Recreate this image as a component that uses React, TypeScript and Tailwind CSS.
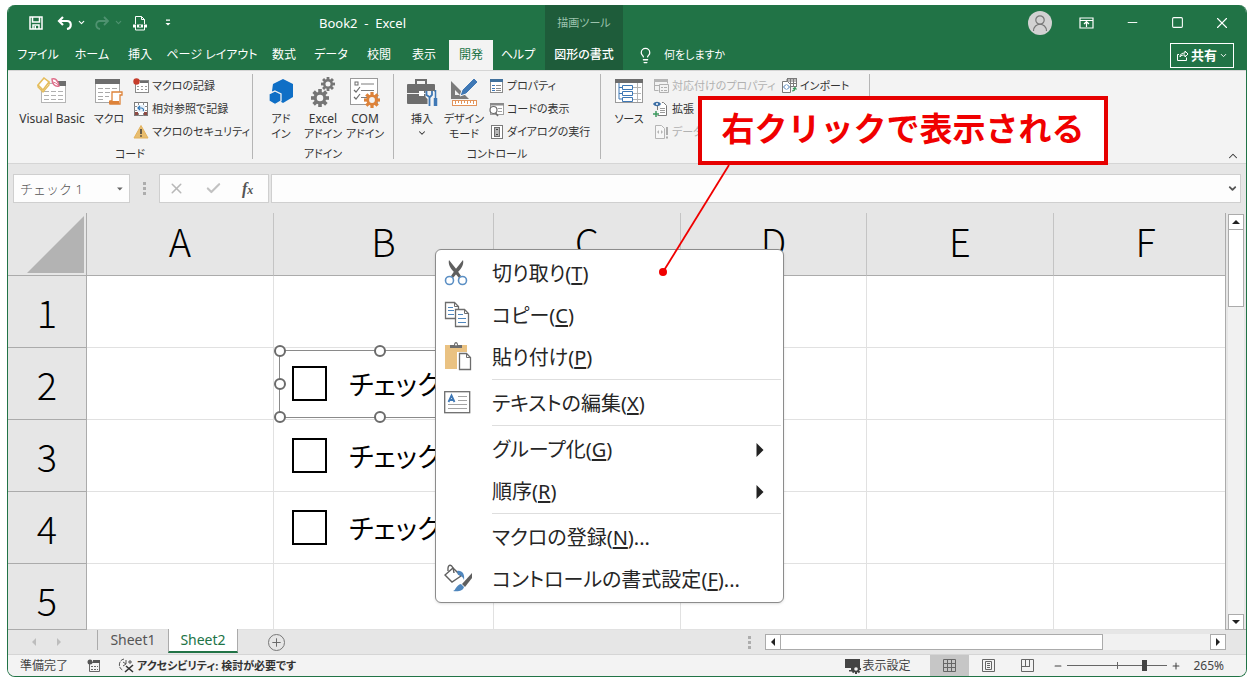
import React, { useState } from 'react';
import { ChevronDown, ChevronUp, Lightbulb, X, Check, Minus, Plus, Square } from 'lucide-react';

const tabs = [
  { label: 'ファイル', width: 'w-[54px]' },
  { label: 'ホーム', width: 'w-[54px]' },
  { label: '挿入', width: 'w-[42px]' },
  { label: 'ページ レイアウト', width: 'w-[102px]' },
  { label: '数式', width: 'w-[42px]' },
  { label: 'データ', width: 'w-[52px]' },
  { label: '校閲', width: 'w-[44px]' },
  { label: '表示', width: 'w-[46px]' },
  { label: '開発', width: 'w-[44px]' },
  { label: 'ヘルプ', width: 'w-[50px]' },
];

const columns = [
  { name: 'A', width: 'w-[187px]' },
  { name: 'B', width: 'w-[220px]' },
  { name: 'C', width: 'w-[187px]' },
  { name: 'D', width: 'w-[186px]' },
  { name: 'E', width: 'w-[187px]' },
  { name: 'F', width: '' },
];

/* ---------- ribbon icons ---------- */

const VisualBasicIcon = () => (
  <svg width="30" height="28" viewBox="0 0 30 28" fill="none">
    <rect x="4.500" y="6.500" width="24" height="19" fill="#fff" stroke="#b5b5b5" />
    <rect x="20" y="4" width="9" height="5" fill="#6d6d6d" />
    <path d="M7 14.500h5M14 14.500h5M21 14.500h5M7 18.500h5M14 18.500h5M21 18.500h5M7 22.500h5M14 22.500h5M21 22.500h5" stroke="#b0b0b0" />
    <path d="M7 1l5 4-6 8-5-5z" fill="#fff" stroke="#e5bd5c" strokeWidth="1.600" />
    <path d="M12 5v3l-6 7-5-5V8" stroke="#e5bd5c" strokeWidth="1.300" />
    <path d="M15 2c3-1 6 1 7 7-4 1-7-2-7-7z" fill="#fff" stroke="#e0708c" strokeWidth="1.500" />
    <path d="M15 5c2 0 5 1 7 4" stroke="#e0708c" />
  </svg>
);

const MacroIcon = () => (
  <svg width="30" height="28" viewBox="0 0 30 28" fill="none">
    <rect x="1.500" y="2.500" width="24" height="23" fill="#fff" stroke="#a8a8a8" />
    <rect x="1" y="2" width="25" height="5" fill="#6d6d6d" />
    <path d="M4 11.500h5M11 11.500h5M18 11.500h5M4 15.500h5M11 15.500h5M4 19.500h5M11 19.500h4M4 22.500h5" stroke="#a8a8a8" />
    <path d="M18 15h10v3h-2v9H16v-3h2z" fill="#fff" stroke="#dd8239" strokeWidth="1.300" />
    <path d="M15 24h10v3H15z" fill="#dd8239" />
  </svg>
);

const RecordIcon = () => (
  <svg width="16" height="16" viewBox="0 0 16 16" fill="none">
    <rect x="2.500" y="2.500" width="13" height="12" fill="#fff" stroke="#8a8a8a" />
    <path d="M7 3h8v2H7z" fill="#6d6d6d" />
    <path d="M4 8.500h2M8 8.500h2M12 8.500h2M4 11.500h2M8 11.500h2M12 11.500h2" stroke="#9a9a9a" />
    <circle cx="3.500" cy="3.500" r="3.200" fill="#c63d2b" />
  </svg>
);

const RelativeIcon = () => (
  <svg width="16" height="16" viewBox="0 0 16 16" fill="none">
    <rect x="1.500" y="1.500" width="13" height="13" fill="#fff" stroke="#7b7b7b" />
    <path d="M5.500 1v4M10.500 1v4M1 5.500h4M1 9.500h4M11 5.500h4M11 9.500h4M5.500 12v3M10.500 12v3" stroke="#8b8b8b" />
    <rect x="4" y="4" width="8" height="7" fill="#e7f0f8" />
    <path d="M5 7h3.500c2 0 2.500 2 1.500 3M7 5L5 7l2 2" stroke="#2f75b5" strokeWidth="1.200" />
    <path d="M2 11h3v3H2zM11 11h3v3h-3z" fill="#8f4a42" />
  </svg>
);

const WarningIcon = () => (
  <svg width="16" height="16" viewBox="0 0 16 16" fill="none">
    <path d="M8 1.500L15 14H1z" fill="#e8bd6f" stroke="#e3b25c" strokeLinejoin="round" />
    <path d="M8 5v5M8 11.200v1.500" stroke="#3b3b3b" strokeWidth="1.500" />
  </svg>
);

const AddInIcon = () => (
  <svg width="26" height="28" viewBox="0 0 26 28">
    <path d="M15 2l10 5v13l-10 6-5-3-6-9 1-7z" fill="#0f6fc6" />
    <path d="M7 14l6 3v7l-6 3.500L1 24v-7z" fill="#0f6fc6" stroke="#f3f3f3" strokeWidth="1.300" />
  </svg>
);

const Gear = ({ cx, cy, r, color }: { cx: number; cy: number; r: number; color: string }) => (
  <g transform={`translate(${cx} ${cy}) scale(${r / 10})`}>
    {[0, 45, 90, 135].map(a => (
      <rect key={a} x="-2" y="-10" width="4" height="20" fill={color} transform={`rotate(${a})`} />
    ))}
    <circle r="7" fill={color} />
    <circle r="3.600" fill="#f3f3f3" />
  </g>
);

const ExcelAddInIcon = () => (
  <svg width="28" height="30" viewBox="0 0 28 30">
    <Gear cx={19} cy={7} r={7} color="#757575" />
    <Gear cx={11} cy={21} r={9} color="#757575" />
  </svg>
);

const ComAddInIcon = () => (
  <svg width="32" height="31" viewBox="0 0 32 31" fill="none">
    <rect x="1.500" y="1.500" width="27" height="26" fill="#fff" stroke="#9a9a9a" />
    <rect x="6" y="5" width="3" height="3" stroke="#6d6d6d" />
    <path d="M12 7h13M12 13.500h13M12 20.500h6" stroke="#7d7d7d" />
    <path d="M5 13l2 2 4-5M5 20l2 2 4-5" stroke="#6d6d6d" strokeWidth="1.200" />
    <Gear cx={23} cy={23} r={8} color="#dd8239" />
  </svg>
);

const InsertIcon = () => (
  <svg width="32" height="30" viewBox="0 0 32 30" fill="none">
    <path d="M10 7V3h10v4" stroke="#6d6d6d" strokeWidth="2" />
    <rect x="1" y="7" width="28" height="20" rx="1" fill="#6d6d6d" />
    <path d="M1 16.500h28" stroke="#f3f3f3" />
    <rect x="13" y="14" width="5" height="5" fill="#fff" />
    <path d="M22 14v5l2 2v7M26 14v5l-2 2M29 15v13" stroke="#f3f3f3" strokeWidth="5" />
    <path d="M20.500 14v4l3 2v9M26 14v4l-2 2" stroke="#3f78b5" strokeWidth="1.800" />
    <path d="M29.500 13v8" stroke="#3f78b5" strokeWidth="1.500" />
    <path d="M29.500 21v8" stroke="#3f78b5" strokeWidth="3.500" />
  </svg>
);

const DesignIcon = () => (
  <svg width="32" height="30" viewBox="0 0 32 30" fill="none">
    <path d="M3 4v18h18z M7 13v5h5z" fill="#7b7b7b" fillRule="evenodd" />
    <path d="M12 19l2-6L26 1l4 4-12 12z" fill="#3f78b5" stroke="#f3f3f3" />
    <rect x="4.500" y="23.500" width="24" height="5" fill="#fff" stroke="#e2935a" />
    <path d="M7.500 24v3M10.500 24v2M13.500 24v3M16.500 24v2M19.500 24v3M22.500 24v2M25.500 24v3" stroke="#e2935a" />
  </svg>
);

const PropertyIcon = () => (
  <svg width="16" height="16" viewBox="0 0 16 16" fill="none">
    <rect x="2.500" y="1.500" width="12" height="13" fill="#fff" stroke="#8a8a8a" />
    <path d="M2 1h13v3H2z" fill="#41719c" />
    <path d="M4 7.500h3M4 10.500h3M4 12.500h3" stroke="#3f78b5" />
    <path d="M8 7.500h5M8 10.500h5M8 12.500h5" stroke="#8a8a8a" />
  </svg>
);

const CodeIcon = () => (
  <svg width="16" height="16" viewBox="0 0 16 16" fill="none">
    <rect x="2.500" y="2.500" width="13" height="11" fill="#fff" stroke="#a0a0a0" />
    <path d="M2 2h14v2.500H2z" fill="#8a8a8a" />
    <path d="M10 7.500h4M10 10.500h4" stroke="#a0a0a0" />
    <circle cx="5.500" cy="9" r="3.500" fill="#fff" stroke="#6d6d6d" strokeWidth="1.200" />
    <path d="M7.500 12l2.500 3" stroke="#6d6d6d" strokeWidth="1.600" />
  </svg>
);

const DialogIcon = () => (
  <svg width="16" height="16" viewBox="0 0 16 16" fill="none">
    <rect x="3.500" y="1.500" width="11" height="13" fill="#fff" stroke="#7b7b7b" />
    <rect x="6.500" y="3.500" width="5" height="9" fill="#b5b5b5" stroke="#6d6d6d" />
    <path d="M8 5.500h2M8 10.500h2" stroke="#444" />
  </svg>
);

const SourceIcon = () => (
  <svg width="28" height="28" viewBox="0 0 28 28" fill="none">
    <rect x="0.500" y="2.500" width="27" height="23" fill="#fff" stroke="#9a9a9a" />
    <path d="M0 2h28v4H0z" fill="#6d6d6d" />
    <path d="M4 6v16h4M4 10.500h4M4 16.500h4" stroke="#3f78b5" />
    <path d="M17 10.500h9M17 16.500h9M17 22.500h9M22.500 6v19" stroke="#b5b5b5" />
    <path d="M7.500 8.500h10v4h-10zM7.500 14.500h10v4h-10zM7.500 20.500h10v4h-10z" fill="#fff" stroke="#3f78b5" />
  </svg>
);

const MapPropertyIcon = () => (
  <svg width="16" height="16" viewBox="0 0 16 16" fill="none">
    <path d="M1.500 2.500h13v3M1.500 2.500v10h4" stroke="#b0b0b0" />
    <path d="M1 1h14v3H1z" fill="#b5b5b5" />
    <path d="M6.500 6.500h9v8h-9zM8 9.500h2M11 9.500h3M8 12.500h2M11 12.500h3M1 7.500h5" stroke="#b0b0b0" />
  </svg>
);

const ExpandIcon = () => (
  <svg width="16" height="16" viewBox="0 0 16 16" fill="none">
    <path d="M4.500 9V5M4.500 14.500h9v-10l-3-3H9" fill="#fff" stroke="#7b7b7b" />
    <path d="M7 7.500h5M7 9.500h5M7 11.500h5" stroke="#9a9a9a" />
    <path d="M0 3c2-3 6-3 8 0-2 3-6 3-8 0z" fill="#3b6ea5" />
    <circle cx="4" cy="3" r="1" fill="#fff" />
    <path d="M3 10v6M0 13h6" stroke="#3c9a5f" strokeWidth="1.500" />
  </svg>
);

const RefreshDataIcon = () => (
  <svg width="16" height="16" viewBox="0 0 16 16" fill="none">
    <path d="M2.500 1.500h6l3 3v10h-9z" stroke="#b5b5b5" fill="#f7f7f7" />
    <path d="M4 8l2-2v4zM10 8L8 6v4z" fill="#b5b5b5" />
    <path d="M14 3v8M14 12.500v2" stroke="#a5a5a5" strokeWidth="1.800" />
  </svg>
);

const ImportIcon = () => (
  <svg width="16" height="16" viewBox="0 0 16 16" fill="none">
    <rect x="6.500" y="0.500" width="9" height="8" fill="#fff" stroke="#7b7b7b" />
    <path d="M6 1h10v2H6zM9.500 1v7M12.500 1v7M6 5.500h9" stroke="#7b7b7b" />
    <path d="M1.500 3.500h5l3 3v8h-8z" fill="#fff" stroke="#7b7b7b" />
    <path d="M5 6.500L2.500 9 5 11.500M6 6.500L8.500 9 6 11.500" stroke="#3f78b5" />
    <path d="M11 13c2 0 3-1 3-3M12 11l2-1.500 1.500 2" stroke="#3c9a5f" strokeWidth="1.200" />
  </svg>
);

/* ---------- context menu icons ---------- */

const CutIcon = () => (
  <svg width="28" height="30" viewBox="0 0 28 30" fill="none">
    <path d="M5 1C4 5 6 9 10 13l5 6 2-2-4-6z" fill="#5f5f5f" />
    <path d="M19 1c1 4-1 8-5 12l-5 6-2-2 4-6z" fill="#5f5f5f" />
    <circle cx="5.500" cy="21.500" r="4" stroke="#5b8fc4" strokeWidth="1.600" />
    <circle cx="18.500" cy="21.500" r="4" stroke="#5b8fc4" strokeWidth="1.600" />
  </svg>
);

const CopyIcon = () => (
  <svg width="28" height="30" viewBox="0 0 28 30" fill="none">
    <path d="M1.500 1.500h9l4 4v12h-13z" fill="#fff" stroke="#6d6d6d" strokeWidth="1.300" />
    <path d="M10.500 1.500v4h4" stroke="#6d6d6d" />
    <path d="M4 6.500h5M4 9.500h6M4 13.500h6" stroke="#4f86bd" strokeWidth="1.200" />
    <path d="M11.500 8.500h9l4 4v13h-13z" fill="#fff" stroke="#6d6d6d" strokeWidth="1.300" />
    <path d="M20.500 8.500v4h4" stroke="#6d6d6d" />
    <path d="M14 13.500h5M14 17.500h8M14 21.500h8" stroke="#4f86bd" strokeWidth="1.200" />
  </svg>
);

const PasteIcon = () => (
  <svg width="28" height="34" viewBox="0 0 28 34" fill="none">
    <path d="M1 4h22v24H1z" fill="#eac282" />
    <path d="M6 7V4h4c0-4 4-4 4 0h4v3z" fill="#6d6d6d" />
    <circle cx="12" cy="3.500" r="1" fill="#fff" />
    <path d="M13 11h15v18H13z" fill="#fff" />
    <path d="M15.500 12.500h7l4 4v12h-11z" fill="#fff" stroke="#6d6d6d" strokeWidth="1.300" />
    <path d="M22.500 12.500v4h4" stroke="#6d6d6d" />
  </svg>
);

const EditTextIcon = () => (
  <svg width="28" height="26" viewBox="0 0 28 26" fill="none">
    <rect x="0.700" y="0.700" width="25" height="21" fill="#fff" stroke="#6d6d6d" strokeWidth="1.300" />
    <path d="M4.500 11L7.500 4.500 10.500 11M5.500 9h4" stroke="#3f78b5" strokeWidth="1.800" />
    <path d="M14 5.500h9M14 9.500h9M4 13.500h19M4 17.500h19" stroke="#a3a3a3" />
  </svg>
);

const FormatIcon = () => (
  <svg width="28" height="34" viewBox="0 0 28 34" fill="none">
    <path d="M9 5l8 8-9 6-7-7z" fill="#fff" stroke="#5f5f5f" strokeWidth="1.400" />
    <path d="M4 8c-1-8 5-8 6 2" stroke="#5f5f5f" strokeWidth="1.400" />
    <path d="M13 8c5-1 8 3 7 9-1-3-3-5-6-5z" fill="#4f86bd" />
    <path d="M28 10v5l-7 9-3-3z" fill="#5f5f5f" />
    <path d="M17 21l3 3c-1 4-6 5-11 4 3-1 3-6 8-7z" fill="#4f86bd" />
  </svg>
);

const menuGroups = [
  [
    { label: '切り取り', accessKey: 'T', icon: <CutIcon /> },
    { label: 'コピー', accessKey: 'C', icon: <CopyIcon /> },
    { label: '貼り付け', accessKey: 'P', icon: <PasteIcon /> },
  ],
  [{ label: 'テキストの編集', accessKey: 'X', icon: <EditTextIcon /> }],
  [
    { label: 'グループ化', accessKey: 'G', submenu: true },
    { label: '順序', accessKey: 'R', submenu: true },
  ],
  [
    { label: 'マクロの登録', accessKey: 'N', dots: true },
    { label: 'コントロールの書式設定', accessKey: 'F', dots: true, icon: <FormatIcon /> },
  ],
] as { label: string; accessKey: string; icon?: React.ReactNode; submenu?: boolean; dots?: boolean }[][];

const BigButton = ({ icon, lines, width, arrow }: { icon: React.ReactNode; lines: string[]; width: string; arrow?: boolean }) => (
  <button className={`${width} flex flex-col items-center whitespace-nowrap leading-[15px]`}>
    <span className="h-[34px] flex items-start justify-center">{icon}</span>
    {lines.map(line => (
      <span key={line} className={/^[A-Z]/.test(line) ? 'text-xs leading-[15px]' : 'text-[11px] leading-[15px]'}>{line}</span>
    ))}
    {arrow && <ChevronDown size={10} strokeWidth={2.500} className="mt-0.5" />}
  </button>
);

const SmallButton = ({ icon, label, disabled }: { icon: React.ReactNode; label: string; disabled?: boolean }) => (
  <button disabled={disabled} className="h-[23px] flex items-center gap-[3px] text-[11px] whitespace-nowrap disabled:text-[#b1b1b1]">
    {icon}
    {label}
  </button>
);

const RibbonGroup = ({ label, width, children }: { label?: string; width: string; children: React.ReactNode }) => (
  <section className={`${width} shrink-0 border-r border-[#b5b5b5] flex flex-col justify-between`}>
    <div className="flex">{children}</div>
    {label && <h2 className="text-center text-[11px] leading-[10px]">{label}</h2>}
  </section>
);

const Handle = ({ place }: { place: string }) => (
  <span className={`absolute size-3 -m-1.5 rounded-full border-2 border-[#6b6b6b] bg-white ${place}`} />
);

const CheckShape = ({ selected }: { selected?: boolean }) => (
  <div className={`relative ml-[5px] w-[202px] h-[68px] border ${selected ? 'border-[#8a8a8a]' : 'border-transparent'}`}>
    <label className="h-full pl-3 flex items-center gap-[22px] text-[27px] whitespace-nowrap">
      <input type="checkbox" className="appearance-none size-[35px] border-2 border-black bg-white" />
      チェック
    </label>
    {selected && (
      <>
        <Handle place="left-0 top-0" />
        <Handle place="left-1/2 top-0" />
        <Handle place="left-full top-0" />
        <Handle place="left-0 top-1/2" />
        <Handle place="left-full top-1/2" />
        <Handle place="left-0 top-full" />
        <Handle place="left-1/2 top-full" />
        <Handle place="left-full top-full" />
      </>
    )}
  </div>
);

const Arrow = ({ d, size = 8, color = '#222' }: { d: string; size?: number; color?: string }) => (
  <svg width={size} height={size} viewBox="0 0 8 8">
    <path d={d} fill={color} />
  </svg>
);

const LEFT = 'M6 0v8L2 4z';
const RIGHT = 'M2 0v8l4-4z';
const UP = 'M0 6h8L4 2z';
const DOWN = 'M0 2h8L4 6z';

const Dots = () => (
  <span className="flex flex-col gap-0.5">
    <i className="size-[3px] bg-[#adadad]" />
    <i className="size-[3px] bg-[#adadad]" />
    <i className="size-[3px] bg-[#adadad]" />
  </span>
);

const ContextMenu = () => (
  <div
    role="menu"
    className="absolute left-[435px] top-[249px] w-[349px] pt-[3px] pb-px bg-white border border-[#8c8c8c] rounded-md shadow-sm text-xl text-[#262626]"
  >
    {menuGroups.map((group, i) => (
      <React.Fragment key={i}>
        {i > 0 && <hr className="ml-14 mr-0.5 mb-[3px] border-t border-[#dedede]" />}
        {group.map(item => (
          <button key={item.label} role="menuitem" className="w-full h-[42px] pl-2 pr-4 flex items-center gap-5 text-left whitespace-nowrap">
            <span className="w-7 flex">{item.icon}</span>
            <span className="flex-1">
              {item.label}(<u className="underline-offset-2">{item.accessKey}</u>){item.dots && '...'}
            </span>
            {item.submenu && <Arrow d="M2 0v8l4-4z" size={14} />}
          </button>
        ))}
      </React.Fragment>
    ))}
  </div>
);

const TitleBar = () => (
  <header className="flex bg-[#217346] text-white">
    <div className="w-[537px] shrink-0">
      <div className="h-[35px] pl-[21px] flex items-center">
        <button aria-label="上書き保存">
          <svg width="14" height="14" viewBox="0 0 14 14" fill="none">
            <path d="M1 1h12v12H1z M3.500 1v5h7V1 M4 13V9h6v4" stroke="#fff" strokeWidth="1.500" />
            <path d="M5.500 10h1.500v3H5.500z" fill="#fff" />
          </svg>
        </button>
        <button aria-label="元に戻す" className="ml-3.5 flex items-center gap-1">
          <svg width="16" height="14" viewBox="0 0 16 14" fill="none">
            <path d="M6 1L2 5l4 4M2 5h8c5 0 5 7 0 8" stroke="#fff" strokeWidth="2.200" />
          </svg>
          <ChevronDown size={9} strokeWidth={3} />
        </button>
        <button aria-label="やり直し" className="ml-2 flex items-center gap-1 text-[#4f9270]">
          <svg width="16" height="14" viewBox="0 0 16 14" fill="none">
            <path d="M10 1l4 4-4 4M14 5H6c-5 0-5 7 0 8" stroke="currentColor" strokeWidth="1.800" />
          </svg>
          <ChevronDown size={9} strokeWidth={3} />
        </button>
        <button aria-label="印刷プレビュー" className="ml-2.5">
          <svg width="14" height="16" viewBox="0 0 14 16" fill="none">
            <path d="M2.500 9V1.500h6l3 3V9M8.500 1.500v3h3M2.500 12v3h9v-3" stroke="#fff" />
            <path d="M0 9.500h3v3H0zM11 9.500h3v3h-3zM4 9.500h6v3H4z" fill="#fff" />
            <circle cx="7" cy="11" r="1" fill="#217346" />
          </svg>
        </button>
        <button aria-label="クイック アクセス ツール バー" className="ml-[15px]">
          <svg width="12" height="10" viewBox="0 0 12 10">
            <path d="M4 1.500h4v1.300H4zM3.500 5h5L6 7.500z" fill="#fff" />
          </svg>
        </button>
        <h1 className="ml-[145px] text-[13px] whitespace-pre">Book2  -  Excel</h1>
      </div>
      <nav className="h-[30px] pl-[3px] flex items-stretch">
        {tabs.map(tab => (
          <button
            key={tab.label}
            className={`${tab.width} shrink-0 whitespace-nowrap ${tab.label === '開発' ? 'ml-0.5 bg-[#f3f3f3] text-[#217346]' : ''}`}
          >
            {tab.label}
          </button>
        ))}
      </nav>
    </div>
    <div className="w-[78px] shrink-0 bg-[#1e5c3a] text-center">
      <p className="h-[35px] leading-9 text-[#9cc3ad] text-[11px]">描画ツール</p>
      <button className="h-[30px] w-full font-medium whitespace-nowrap">図形の書式</button>
    </div>
    <div className="flex-1">
      <div className="h-[35px] pr-[15px] flex items-center justify-end">
        <button aria-label="アカウント" className="size-6 rounded-full bg-[#d2d2d2] flex items-center justify-center">
          <svg width="18" height="18" viewBox="0 0 18 18" fill="none">
            <circle cx="9" cy="6" r="4.200" stroke="#777" strokeWidth="1.200" />
            <path d="M2.500 17c0-9 13-9 13 0" stroke="#777" strokeWidth="1.200" />
          </svg>
        </button>
        <button aria-label="リボンの表示オプション" className="ml-[27px]">
          <svg width="15" height="12" viewBox="0 0 15 12" fill="none">
            <path d="M1 1h13v10H1zM1 3.500h13M7.500 10V5M5 7l2.500-2.500L10 7" stroke="#fff" strokeWidth="1.200" />
          </svg>
        </button>
        <button aria-label="最小化" className="ml-[31px]"><Minus size={15} strokeWidth={1.500} /></button>
        <button aria-label="最大化" className="ml-[31px]"><Square size={13} strokeWidth={2} /></button>
        <button aria-label="閉じる" className="ml-[29px]"><X size={18} strokeWidth={1.500} /></button>
      </div>
      <div className="h-[30px] pl-[14px] pr-3 flex items-center">
        <Lightbulb size={17} strokeWidth={1.800} />
        <button className="ml-2.5 text-[11px]">何をしますか</button>
        <button className="ml-auto w-16 h-[25px] border border-white flex items-center justify-center gap-0.5 text-[13px] font-bold">
          <svg width="13" height="13" viewBox="0 0 13 13" fill="none">
            <path d="M3 5.500H1.500v6h9v-3M4 8c0-3 2-4 5-4V2l3 3-3 3V6c-2 0-4 0-5 2z" stroke="#fff" />
          </svg>
          共有
          <ChevronDown size={9} strokeWidth={2.500} />
        </button>
      </div>
    </div>
  </header>
);

const Ribbon = () => (
  <div className="h-[94px] pt-[3px] pb-1 flex bg-[#f3f3f3] border-y border-y-[#d5d5d5] text-[#333]">
    <RibbonGroup label="コード" width="w-[245px]">
      <div className="flex pt-[3px] pl-2">
        <BigButton icon={<VisualBasicIcon />} lines={['Visual Basic']} width="w-[72px]" />
        <BigButton icon={<MacroIcon />} lines={['マクロ']} width="w-[42px]" />
      </div>
      <div className="pl-[3px]">
        <SmallButton icon={<RecordIcon />} label="マクロの記録" />
        <SmallButton icon={<RelativeIcon />} label="相対参照で記録" />
        <SmallButton icon={<WarningIcon />} label="マクロのセキュリティ" />
      </div>
    </RibbonGroup>
    <RibbonGroup label="アドイン" width="w-[141px]">
      <div className="flex pt-[3px] pl-[7px]">
        <BigButton icon={<AddInIcon />} lines={['アド', 'イン']} width="w-[42px]" />
        <BigButton icon={<ExcelAddInIcon />} lines={['Excel', 'アドイン']} width="w-[42px]" />
        <BigButton icon={<ComAddInIcon />} lines={['COM', 'アドイン']} width="w-[42px]" />
      </div>
    </RibbonGroup>
    <RibbonGroup label="コントロール" width="w-[207px]">
      <div className="flex pt-[3px] pl-2">
        <BigButton icon={<InsertIcon />} lines={['挿入']} width="w-[40px]" arrow />
        <BigButton icon={<DesignIcon />} lines={['デザイン', 'モード']} width="w-[44px]" />
      </div>
      <div className="pl-0.5">
        <SmallButton icon={<PropertyIcon />} label="プロパティ" />
        <SmallButton icon={<CodeIcon />} label="コードの表示" />
        <SmallButton icon={<DialogIcon />} label="ダイアログの実行" />
      </div>
    </RibbonGroup>
    <RibbonGroup width="w-[269px]">
      <div className="flex pt-[3px] pl-2">
        <BigButton icon={<SourceIcon />} lines={['ソース']} width="w-[40px]" />
      </div>
      <div className="w-[128px] pl-1">
        <SmallButton icon={<MapPropertyIcon />} label="対応付けのプロパティ" disabled />
        <SmallButton icon={<ExpandIcon />} label="拡張" />
        <SmallButton icon={<RefreshDataIcon />} label="データ" disabled />
      </div>
      <div className="pl-1">
        <SmallButton icon={<ImportIcon />} label="インポート" />
      </div>
    </RibbonGroup>
    <button aria-label="リボンを折りたたむ" className="ml-auto self-end mr-1.5 -mb-1">
      <ChevronUp size={14} strokeWidth={1.800} />
    </button>
  </div>
);

const FormulaBar = () => (
  <div className="py-2.5 px-[5px] flex items-center text-[#555]">
    <div className="w-[117px] h-[29px] shrink-0 pl-1.5 pr-1.5 flex items-center bg-[#fdfdfd] border border-[#cfcfcf]">
      <input aria-label="名前ボックス" defaultValue="チェック 1" className="w-full min-w-0 text-[13px] font-light [font-feature-settings:normal] outline-none" />
      <Arrow d={DOWN} color="#666" size={6} />
    </div>
    <div className="w-[29px] flex justify-center"><Dots /></div>
    <div className="w-[110px] h-[29px] shrink-0 flex items-center gap-5 pl-2 bg-[#fdfdfd] border border-[#cfcfcf]">
      <button aria-label="キャンセル"><X size={17} strokeWidth={2.200} className="text-[#b8b8b8]" /></button>
      <button aria-label="入力"><Check size={17} strokeWidth={3} className="text-[#c2c2c2]" /></button>
      <button className="font-['Liberation_Serif',serif] italic font-bold text-base leading-5">
        f<span className="text-xs">x</span>
      </button>
    </div>
    <div className="ml-0.5 flex-1 h-[29px] pl-2 pr-0.5 flex items-center bg-[#fdfdfd] border border-[#cfcfcf]">
      <input aria-label="数式バー" className="flex-1 outline-none" />
      <ChevronDown size={11} strokeWidth={4} />
    </div>
  </div>
);

const Sheet = () => (
  <div className="flex">
    <table className="flex-1 w-full table-fixed border-separate border-spacing-0 border-r border-[#ababab] bg-white text-black font-['Noto_Sans_CJK_JP',sans-serif]">
      <thead>
        <tr className="h-[63px] bg-[#e6e6e6] text-[38px] leading-[56px]">
          <th className="w-[79px] p-0 border-r border-b border-[#ababab]">
            <svg width="57" height="57" viewBox="0 0 57 57" className="ml-[19px]">
              <path d="M57 0v57H0z" fill="#b3b3b3" />
            </svg>
          </th>
          {columns.map(col => (
            <th key={col.name} scope="col" className={`${col.width} p-0 border-b border-b-[#ababab] border-r border-r-[#c4c4c4] last:border-r-0 last:pl-3 font-light align-top`}>
              {col.name}
            </th>
          ))}
        </tr>
      </thead>
      <tbody>
        {[1, 2, 3, 4, 5].map(row => (
          <tr key={row} className="h-[72px] last:h-[66px]">
            <th scope="row" className="p-0 pt-2 bg-[#e6e6e6] border-r border-b border-[#ababab] font-light text-[38px] leading-[56px] align-top">
              {row}
            </th>
            {columns.map(col => (
              <td key={col.name} className="p-0 border-r border-b border-[#e1e1e1] last:border-r-0">
                {col.name === 'B' && row > 1 && row < 5 && <CheckShape selected={row === 2} />}
              </td>
            ))}
          </tr>
        ))}
      </tbody>
    </table>
    <div className="w-5 shrink-0 pl-0.5 pr-0.5 pt-px flex flex-col">
      <button aria-label="上へ" className="h-4 shrink-0 flex items-center justify-center bg-white border border-[#ababab]"><Arrow d={UP} /></button>
      <div className="flex-1 bg-[#f1f1f1]">
        <div className="h-[77px] bg-white border border-t-0 border-[#ababab]" />
      </div>
      <button aria-label="下へ" className="h-4 shrink-0 flex items-center justify-center bg-white border border-[#ababab]"><Arrow d={DOWN} /></button>
    </div>
  </div>
);

const SheetTabs = () => (
  <div className="h-[25px] -mt-px flex items-start border-t border-[#ababab] text-sm">
    <div className="w-[89px] h-6 pl-[22px] flex items-center gap-[17px]">
      <Arrow d={LEFT} color="#bdbdbd" />
      <Arrow d={RIGHT} color="#bdbdbd" />
    </div>
    <button className="w-[71px] h-5 border-l border-[#ababab] text-[#555]">Sheet1</button>
    <button className="-mt-px w-[70px] h-6 bg-white border-b-2 border-x border-x-[#ababab] border-b-[#217346] text-[#217346]">Sheet2</button>
    <button aria-label="新しいシート" className="ml-[30px] mt-1 size-[17px] rounded-full border border-[#777] text-[#666] flex items-center justify-center">
      <Plus size={13} strokeWidth={1.800} />
    </button>
    <div className="ml-auto mt-1.5"><Dots /></div>
    <div className="ml-[14px] mr-5 mt-1 w-[461px] h-4 flex">
      <button aria-label="左へ" className="w-4 flex items-center justify-center bg-white border border-[#ababab]"><Arrow d={LEFT} /></button>
      <div className="flex-1 bg-[#f1f1f1]">
        <div className="w-3/4 h-full bg-white border border-l-0 border-[#ababab]" />
      </div>
      <button aria-label="右へ" className="w-4 flex items-center justify-center bg-white border border-[#ababab]"><Arrow d={RIGHT} /></button>
    </div>
  </div>
);

const StatusBar = () => {
  const [zoom, setZoom] = useState(78);

  return (
    <footer className="h-[22px] pl-3 pr-[22px] flex items-center bg-[#f3f3f3] border-t border-[#d5d5d5] text-[#444]">
      <span>準備完了</span>
      <svg width="14" height="13" viewBox="0 0 14 13" fill="none" className="ml-[19px]">
        <path d="M2.500 3.500h10v9h-10zM4 7.500h2M7 7.500h2M10 7.500h1M4 10.500h2M7 10.500h2M10 10.500h1" stroke="#666" />
        <path d="M6 1h7v3H6z" fill="#555" />
        <circle cx="3" cy="3" r="2.500" fill="#555" />
      </svg>
      <svg width="16" height="15" viewBox="0 0 16 15" fill="none" className="ml-[17px]">
        <path d="M6 1C0 2 0 11 5 12" stroke="#555" strokeDasharray="4 1" />
        <path d="M5 4l3 2M8 2v4M8 6L5 8M10 4h4M12 2v4" stroke="#555" />
        <path d="M8 8l7 6M15 7l-8 7" stroke="#333" strokeWidth="1.600" />
      </svg>
      <button className="ml-[3px] text-[11px] font-bold text-[#333]">アクセシビリティ: 検討が必要です</button>
      <button className="ml-auto flex items-center">
        <svg width="17" height="16" viewBox="0 0 17 16" fill="none">
          <path d="M0 1h15v9H0zM4 12h5v1.500H4z" fill="#444" />
          <Gear cx={11} cy={11} r={5} color="#444" />
        </svg>
        表示設定
      </button>
      <button aria-label="標準" className="ml-5 w-[39px] h-[21px] flex items-center justify-center bg-[#c6c6c6]">
        <svg width="13" height="13" viewBox="0 0 13 13" fill="none">
          <path d="M.5.5h12v12H.5zM4.500 0v13M8.500 0v13M0 4.500h13M0 8.500h13" stroke="#666" />
        </svg>
      </button>
      <button aria-label="ページ レイアウト" className="w-[39px] flex justify-center">
        <svg width="13" height="13" viewBox="0 0 13 13" fill="none">
          <path d="M.5.5h12v12H.5zM3.500 2.500h6v8h-6zM5 4.500h3M5 6.500h3M5 8.500h3" stroke="#666" />
        </svg>
      </button>
      <button aria-label="改ページ プレビュー" className="w-[39px] flex justify-center">
        <svg width="13" height="13" viewBox="0 0 13 13" fill="none">
          <path d="M.5.5h12v12H.5zM4.500 0v7.500M8.500 0v7.500M1 7.500h8" stroke="#666" />
        </svg>
      </button>
      <button aria-label="縮小" className="ml-1.5"><Minus size={10} strokeWidth={2.500} /></button>
      <div className="ml-1 flex items-center bg-[linear-gradient(#666,#666),linear-gradient(#666,#666)] bg-[size:100%_1px,1px_7px] bg-center bg-no-repeat">
        <input
          type="range"
          aria-label="ズーム"
          value={zoom}
          onChange={e => setZoom(Number(e.target.value))}
          className="w-[100px] h-3 appearance-none bg-transparent [&::-webkit-slider-thumb]:appearance-none [&::-webkit-slider-thumb]:w-[5px] [&::-webkit-slider-thumb]:h-[11px] [&::-webkit-slider-thumb]:bg-[#444]"
        />
      </div>
      <button aria-label="拡大" className="ml-1"><Plus size={10} strokeWidth={2.500} /></button>
      <span className="ml-3">265%</span>
    </footer>
  );
};

const App: React.FC = () => {
  return (
    <div className="relative pt-[5px] pl-[7px] pr-1.5 pb-1.5 bg-white text-xs leading-4 font-['Noto_Sans','Noto_Sans_CJK_JP',sans-serif] [font-feature-settings:'palt']">
      <main className="overflow-hidden rounded-lg border border-t-0 border-[#217346] bg-[#e6e6e6]">
        <TitleBar />
        <Ribbon />
        <FormulaBar />
        <Sheet />
        <SheetTabs />
        <StatusBar />
      </main>
      <ContextMenu />
      <p className="absolute left-[698px] top-[96px] w-[410px] h-[69px] pb-1 flex items-center justify-center bg-white border-4 border-[#e60000] text-[#f00000] text-[33px] font-bold whitespace-nowrap [font-feature-settings:normal]">
        右クリックで表示される
      </p>
      <svg width="76" height="116" viewBox="0 0 76 116" className="absolute left-[657px] top-[163px] pointer-events-none">
        <path d="M72 2L6 109" stroke="#f00000" strokeWidth="1.800" />
        <circle cx="6" cy="109" r="4" fill="#f00000" />
      </svg>
    </div>
  );
};

export default App;
